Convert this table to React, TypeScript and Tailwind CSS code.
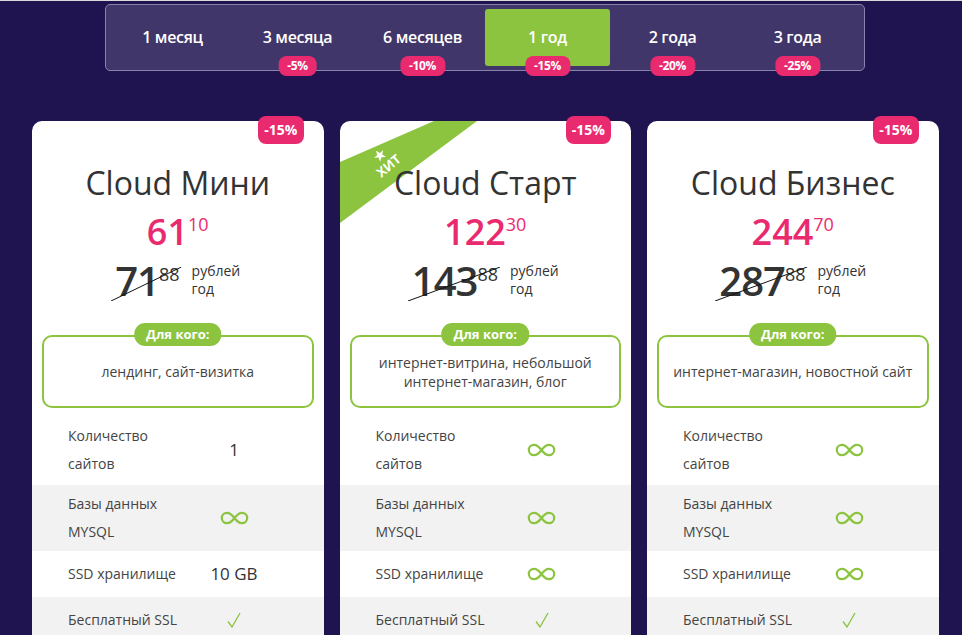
const font = { fontFamily: '"Open Sans", "Noto Sans", sans-serif' };

type Plan = {
  name: string;
  price: string;
  cents: string;
  old: string;
  oldCents: string;
  who: string[];
  sites: string;
  db: string;
  storage: string;
  hit?: boolean;
};

const plans: Plan[] = [
  {
    name: "Cloud Мини",
    price: "61",
    cents: "10",
    old: "71",
    oldCents: "88",
    who: ["лендинг, сайт-визитка"],
    sites: "1",
    db: "inf",
    storage: "10 GB",
  },
  {
    name: "Cloud Старт",
    price: "122",
    cents: "30",
    old: "143",
    oldCents: "88",
    who: ["интернет-витрина, небольшой", "интернет-магазин, блог"],
    sites: "inf",
    db: "inf",
    storage: "inf",
    hit: true,
  },
  {
    name: "Cloud Бизнес",
    price: "244",
    cents: "70",
    old: "287",
    oldCents: "88",
    who: ["интернет-магазин, новостной сайт"],
    sites: "inf",
    db: "inf",
    storage: "inf",
  },
];

const periods = [
  { label: "1 месяц" },
  { label: "3 месяца", badge: "-5%" },
  { label: "6 месяцев", badge: "-10%" },
  { label: "1 год", badge: "-15%", active: true },
  { label: "2 года", badge: "-20%" },
  { label: "3 года", badge: "-25%" },
];

const Infinity = () => (
  <svg width="29" height="14" viewBox="0 0 29 14" fill="none">
    <path
      d="M14.5 7C12 3.5 9.5 1.8 7 1.8a5.2 5.2 0 0 0 0 10.4c2.5 0 5-1.7 7.5-5.2S19.5 1.8 22 1.8a5.2 5.2 0 0 1 0 10.4c-2.5 0-5-1.7-7.5-5.2Z"
      stroke="#8cc43f"
      strokeWidth="2.2"
    />
  </svg>
);

const Check = () => (
  <svg width="14" height="16" viewBox="0 0 14 16" fill="none">
    <path d="M1 9.5 5 15 13 1" stroke="#8cc43f" strokeWidth="1.3" />
  </svg>
);

const Value = ({ v }: { v: string }) =>
  v === "inf" ? (
    <Infinity />
  ) : v === "check" ? (
    <Check />
  ) : (
    <span className="text-[17px] text-[#333]">{v}</span>
  );

const PlanCard = ({ plan }: { plan: Plan }) => {
  const rows = [
    { label: ["Количество", "сайтов"], value: plan.sites, h: "h-[70px]", bg: "bg-white" },
    { label: ["Базы данных", "MYSQL"], value: plan.db, h: "h-[66px]", bg: "bg-[#f2f2f2]" },
    { label: ["SSD хранилище"], value: plan.storage, h: "h-[46px]", bg: "bg-white" },
    { label: ["Бесплатный SSL"], value: "check", h: "h-[46px]", bg: "bg-[#f2f2f2]" },
  ];

  return (
    <div className="relative w-[291.5px] rounded-[10px] bg-white pb-2">
      {plan.hit && (
        <div className="absolute left-0 top-0 h-[110px] w-[140px] overflow-hidden rounded-tl-[10px]">
          <svg width="140" height="110" className="absolute left-0 top-0">
            <polygon points="0,41 94,0 137,0 0,102" fill="#8cc43f" />
          </svg>
          <div className="absolute left-[31px] top-[26px] flex -rotate-[40deg] flex-col items-center">
            <svg width="13" height="13" viewBox="0 0 24 24">
              <polygon
                points="12,1 15,9 23,9 16.5,14 19,22 12,17 5,22 7.5,14 1,9 9,9"
                fill="#fff"
              />
            </svg>
            <span className="text-[13px] font-bold leading-[15px] text-white">ХИТ</span>
          </div>
        </div>
      )}

      <div className="absolute -top-[5px] right-[20px] rounded-[8px] bg-[#ea2a6f] px-[6px] text-[14px] font-bold leading-[28px] text-white">
        -15%
      </div>

      <h2 className="relative mt-[42px] text-center text-[32px] leading-[40px] text-[#333]">
        {plan.name}
      </h2>

      <div className="mt-[9px] flex justify-center text-[#ea2a6f]">
        <span className="text-[36px] font-semibold leading-[40px]">{plan.price}</span>
        <span className="mt-[3px] text-[18px] leading-[18px]">{plan.cents}</span>
      </div>

      <div className="mt-[9px] flex justify-center text-[#333]">
        <div className="relative flex">
          <span className="text-[40px] font-semibold leading-[40px] tracking-[-1px]">{plan.old}</span>
          <span className="mt-[4px] text-[18px] leading-[18px]">{plan.oldCents}</span>
          <svg
            className="absolute -left-[4px] top-[6px] h-[34px] w-[calc(100%+6px)]"
            viewBox="0 0 100 100"
            preserveAspectRatio="none"
          >
            <line x1="0" y1="100" x2="100" y2="0" stroke="#111" strokeWidth="1" vectorEffect="non-scaling-stroke" />
          </svg>
        </div>
        <div className="ml-[12px] mt-[1px] text-[14px] leading-[18px]">
          <div>рублей</div>
          <div>год</div>
        </div>
      </div>

      <div className="relative mx-[10px] mt-[34px] flex h-[73px] flex-col items-center justify-center rounded-[10px] border-2 border-[#8cc43f] text-center text-[14px] leading-[19px] text-[#444]">
        <div className="absolute -top-[14px] left-1/2 -translate-x-1/2 whitespace-nowrap rounded-[11px] bg-[#8cc43f] px-[12px] text-[13px] font-bold leading-[23px] text-white">
          Для кого:
        </div>
        {plan.who.map((line) => (
          <div key={line}>{line}</div>
        ))}
      </div>

      <div className="mt-[7px]">
        {rows.map((row, index) => (
          <div key={index} className={`flex items-center ${row.h} ${row.bg}`}>
            <div className="w-[170px] pl-[36px] text-[14px] leading-[28px] text-[#444]">
              {row.label.map((l) => (
                <div key={l}>{l}</div>
              ))}
            </div>
            <div className="flex w-[64px] justify-center">
              <Value v={row.value} />
            </div>
          </div>
        ))}
      </div>
    </div>
  );
};

export default function App() {
  return (
    <div className="min-h-screen bg-[#1f1350]" style={font}>
      <div className="h-px bg-[#d9d9d9]" />
      <div className="ml-[105px] mt-[3px] w-[760px] rounded-[5px] border border-[#8a82ad] bg-[#413669] p-[4px]">
        <div className="grid grid-cols-6">
          {periods.map((p) => (
            <div
              key={p.label}
              className={`relative flex h-[57px] items-center justify-center rounded-[3px] text-[16px] font-semibold tracking-[-0.3px] text-white ${
                p.active ? "bg-[#8cc43f]" : ""
              }`}
            >
              <span className="-mt-[1px]">{p.label}</span>
              {p.badge && (
                <span className="absolute -bottom-[10px] left-1/2 -translate-x-1/2 rounded-[8px] bg-[#ea2a6f] px-[9px] text-[12px] font-bold leading-[20px] tracking-[-0.3px] text-white">
                  {p.badge}
                </span>
              )}
            </div>
          ))}
        </div>
      </div>

      <div className="ml-[32px] mt-[50px] flex gap-[16px]">
        {plans.map((plan) => (
          <PlanCard key={plan.name} plan={plan} />
        ))}
      </div>
    </div>
  );
}
